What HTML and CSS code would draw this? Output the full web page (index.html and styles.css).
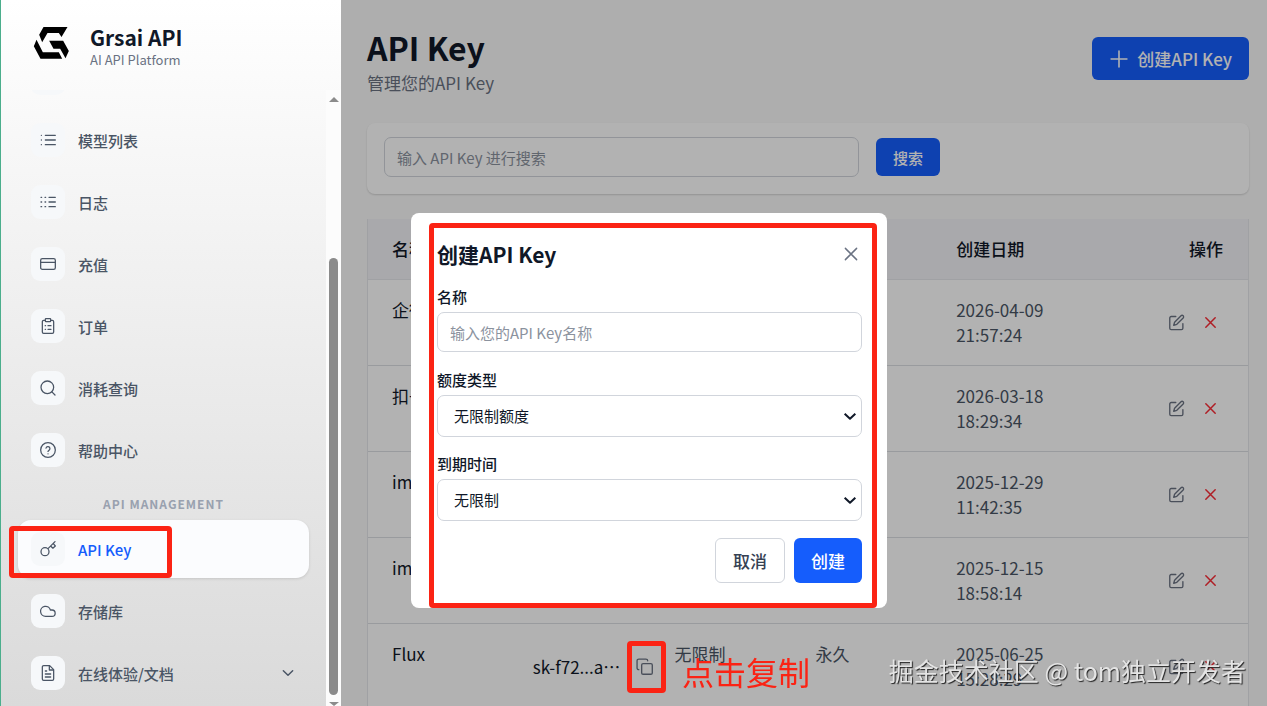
FILE: index.html
```html
<!DOCTYPE html>
<html lang="zh-CN">
<head>
  <meta charset="UTF-8">
  <meta name="viewport" content="width=device-width, initial-scale=1.0">
  <title>API Key - Grsai API</title>
  <link rel="stylesheet" href="styles.css">
</head>
<body>
  <!-- 图标 -->
  <svg class="sprite" aria-hidden="true">
    <symbol id="i-edit" viewBox="0 0 24 24"><path d="M11 3.500H4.500A2 2 0 0 0 2.500 5.500V20a2 2 0 0 0 2 2h14.500a2 2 0 0 0 2-2v-6.500"/><path d="M18.400 2.600a2.100 2.100 0 0 1 3 3L12.400 14.600 8 16l1.300-4.400z"/></symbol>
    <symbol id="i-x" viewBox="0 0 24 24"><path d="M4.500 4.500l15 15M19.500 4.500l-15 15"/></symbol>
    <symbol id="i-copy" viewBox="0 0 24 24"><rect x="8" y="8" width="15" height="15" rx="2"/><path d="M4 16.500a2.500 2.500 0 0 1-2.500-2.500V4A2.500 2.500 0 0 1 4 1.500h10A2.500 2.500 0 0 1 16.500 4"/></symbol>
    <symbol id="i-down" viewBox="0 0 24 24"><path d="M4 8.500l8 7.500 8-7.500"/></symbol>
  </svg>

  <div class="layout">
    <aside class="sidebar">
      <div class="brand">
        <svg class="brand-logo" viewBox="100 78 110 102" aria-hidden="true">
          <path d="M131 81H203L185 111L177 99H143L127 127L118 104Z"/>
          <path d="M110 119L129 157H177L187 176H122L102 139Z"/>
          <path d="M148 122H190L207 153L197 175L181 146H161Z"/>
        </svg>
        <div class="brand-text">
          <strong class="brand-name">Grsai API</strong>
          <span class="brand-sub">AI API Platform</span>
        </div>
      </div>

      <div class="nav-wrap">
        <nav class="nav">
          <a class="nav-item scrolled" href="#"><span class="nav-icon"></span></a>
          <a class="nav-item" href="#"><span class="nav-icon"><svg viewBox="0 0 24 24"><path d="M8 5h15M8 12h15M8 19h15M2 5h.1M2 12h.1M2 19h.1"/></svg></span>模型列表</a>
          <a class="nav-item" href="#"><span class="nav-icon"><svg viewBox="0 0 24 24"><path d="M13.500 5H23M13.500 12H23M13.500 19H23M1.500 5h1M7.500 5h1M1.500 12h1M7.500 12h1M1.500 19h1M7.500 19h1"/></svg></span>日志</a>
          <a class="nav-item" href="#"><span class="nav-icon"><svg viewBox="0 0 24 24"><rect x="1" y="4" width="22" height="16" rx="2.500"/><path d="M1 9.500h22"/></svg></span>充值</a>
          <a class="nav-item" href="#"><span class="nav-icon"><svg viewBox="0 0 24 24"><rect x="8" y="1" width="8" height="4.500" rx="1"/><path d="M16 3.500h2.500a2 2 0 0 1 2 2V21a2 2 0 0 1-2 2h-13a2 2 0 0 1-2-2V5.500a2 2 0 0 1 2-2H8M12 11.500h4.500M12 17h4.500M7.800 11.500h.5M7.800 17h.5"/></svg></span>订单</a>
          <a class="nav-item" href="#"><span class="nav-icon"><svg viewBox="0 0 24 24"><circle cx="11" cy="11" r="9.500"/><path d="M22.500 22.500l-4.700-4.700"/></svg></span>消耗查询</a>
          <a class="nav-item" href="#"><span class="nav-icon"><svg viewBox="0 0 24 24"><circle cx="12" cy="12" r="11"/><path d="M9 9.300a3 3 0 0 1 5.900.9c0 2-2.900 2.600-2.900 4M12 17.800h.1"/></svg></span>帮助中心</a>
          <h2 class="nav-title">API MANAGEMENT</h2>
          <a class="nav-item active" href="#"><span class="nav-icon"><svg viewBox="0 0 24 24"><circle cx="7.500" cy="16" r="6"/><path d="M12 11.500L22.500 1M16 7.500l3.300 3.300L23 7.500 20 4"/></svg></span>API Key<i class="mark mark-nav"></i></a>
          <a class="nav-item" href="#"><span class="nav-icon"><svg viewBox="0 0 24 24"><path d="M18 20H8.500a7.500 7.500 0 1 1 7.100-9.500H18a4.700 4.700 0 1 1 0 9.500z"/></svg></span>存储库</a>
          <a class="nav-item" href="#"><span class="nav-icon"><svg viewBox="0 0 24 24"><path d="M14.500 1H5.500a2 2 0 0 0-2 2v18a2 2 0 0 0 2 2h13a2 2 0 0 0 2-2V7z"/><path d="M14 1.500v6h6M8 9h2M8 13.500h8M8 18h8"/></svg></span>在线体验/文档<svg class="nav-arrow" viewBox="0 0 24 24"><path d="M5 8.500l7 7 7-7"/></svg></a>
        </nav>
        <div class="scrollbar" aria-hidden="true">
          <i class="scroll-up"></i>
          <i class="scroll-thumb"></i>
          <i class="scroll-down"></i>
        </div>
      </div>
    </aside>

    <main class="main">
      <header class="page-head">
        <div>
          <h1>API Key</h1>
          <p>管理您的API Key</p>
        </div>
        <button class="btn btn-primary btn-lg" type="button"><svg viewBox="0 0 24 24"><path d="M12 2.500v19M2.500 12h19"/></svg>创建API Key</button>
      </header>

      <form class="search-card">
        <input class="field" type="text" placeholder="输入 API Key 进行搜索" aria-label="搜索 API Key">
        <button class="btn btn-primary" type="button">搜索</button>
      </form>

      <table class="key-table">
        <thead>
          <tr><th>名称</th><th>API Key</th><th>额度</th><th>到期时间</th><th>创建日期</th><th class="ops">操作</th></tr>
        </thead>
        <tbody>
          <tr>
            <td class="name">企微</td><td></td><td>无限制</td><td>永久</td><td>2026-04-09<br>21:57:24</td>
            <td><div class="row-ops"><button class="icon-btn" type="button" aria-label="编辑"><svg><use href="#i-edit"/></svg></button><button class="icon-btn del" type="button" aria-label="删除"><svg><use href="#i-x"/></svg></button></div></td>
          </tr>
          <tr>
            <td class="name">扣子</td><td></td><td>无限制</td><td>永久</td><td>2026-03-18<br>18:29:34</td>
            <td><div class="row-ops"><button class="icon-btn" type="button" aria-label="编辑"><svg><use href="#i-edit"/></svg></button><button class="icon-btn del" type="button" aria-label="删除"><svg><use href="#i-x"/></svg></button></div></td>
          </tr>
          <tr>
            <td class="name">image</td><td></td><td>无限制</td><td>永久</td><td>2025-12-29<br>11:42:35</td>
            <td><div class="row-ops"><button class="icon-btn" type="button" aria-label="编辑"><svg><use href="#i-edit"/></svg></button><button class="icon-btn del" type="button" aria-label="删除"><svg><use href="#i-x"/></svg></button></div></td>
          </tr>
          <tr>
            <td class="name">image</td><td></td><td>无限制</td><td>永久</td><td>2025-12-15<br>18:58:14</td>
            <td><div class="row-ops"><button class="icon-btn" type="button" aria-label="编辑"><svg><use href="#i-edit"/></svg></button><button class="icon-btn del" type="button" aria-label="删除"><svg><use href="#i-x"/></svg></button></div></td>
          </tr>
          <tr>
            <td class="name">Flux</td>
            <td class="name"><div class="key-cell"><span>sk-f72...a…</span><button class="icon-btn" type="button" aria-label="复制"><svg><use href="#i-copy"/></svg></button></div></td>
            <td>无限制</td><td>永久</td><td>2025-06-25<br>15:28:29</td>
            <td><div class="row-ops"><button class="icon-btn" type="button" aria-label="编辑"><svg><use href="#i-edit"/></svg></button><button class="icon-btn del" type="button" aria-label="删除"><svg><use href="#i-x"/></svg></button></div></td>
          </tr>
        </tbody>
      </table>
    </main>
  </div>

  <div class="backdrop"></div>

  <!-- 创建弹窗 -->
  <div class="modal-wrap">
    <form class="modal" role="dialog" aria-labelledby="modal-title">
      <div class="modal-head">
        <h2 id="modal-title">创建API Key</h2>
        <button class="icon-btn close" type="button" aria-label="关闭"><svg><use href="#i-x"/></svg></button>
      </div>
      <div class="form-row">
        <label for="key-name">名称</label>
        <input class="field" id="key-name" type="text" placeholder="输入您的API Key名称">
      </div>
      <div class="form-row">
        <label for="key-quota">额度类型</label>
        <div class="select">
          <select class="field" id="key-quota"><option>无限制额度</option></select>
          <svg><use href="#i-down"/></svg>
        </div>
      </div>
      <div class="form-row">
        <label for="key-expire">到期时间</label>
        <div class="select">
          <select class="field" id="key-expire"><option>无限制</option></select>
          <svg><use href="#i-down"/></svg>
        </div>
      </div>
      <div class="modal-foot">
        <button class="btn btn-plain" type="button">取消</button>
        <button class="btn btn-primary" type="button">创建</button>
      </div>
      <i class="mark mark-modal"></i>
    </form>
  </div>

  <!-- 标注 -->
  <i class="mark mark-copy"></i>
  <span class="tip">点击复制</span>
  <span class="watermark">掘金技术社区 @ tom独立开发者</span>
</body>
</html>
```
FILE: styles.css
```css
* {
  box-sizing: border-box;
}
body {
  margin: 0;
  height: 100vh;
  overflow: hidden;
  position: relative;
  font-family: "Noto Sans CJK SC", sans-serif;
  font-size: 17px;
  line-height: 25px;
  color: #101828;
  background: #fafafa;
}
h1, h2, p {
  margin: 0;
}
button, input, select {
  font-family: inherit;
}
svg {
  fill: none;
  stroke: currentColor;
  stroke-width: 1.9;
  stroke-linecap: round;
  stroke-linejoin: round;
}
.sprite {
  position: absolute;
  width: 0;
  height: 0;
}
.layout {
  display: flex;
  height: 100vh;
}

/* 侧边栏 */
.sidebar {
  position: relative;
  z-index: 2;
  flex: 0 0 341px;
  display: flex;
  flex-direction: column;
  border-left: 1px solid #4bae8c;
  background: linear-gradient(#fff, #f2f2f2 35%, #dadada);
}
.brand {
  display: flex;
  align-items: center;
  gap: 20px;
  height: 90px;
  padding: 0 32px 4px;
  flex-shrink: 0;
}
.brand-logo {
  width: 37px;
  height: 34px;
  fill: #000;
  stroke: none;
}
.brand-text {
  display: flex;
  flex-direction: column;
  padding-top: 7px;
}
.brand-name {
  font-size: 21px;
  line-height: 26px;
  font-weight: 600;
}
.brand-sub {
  font-size: 13px;
  line-height: 20px;
  color: #6a7282;
}
.nav-wrap {
  display: flex;
  flex: 1;
  min-height: 0;
}
.nav {
  flex: 1;
  padding: 0 17px;
  display: flex;
  flex-direction: column;
  gap: 4px;
  overflow: hidden;
}
.nav-item {
  position: relative;
  display: flex;
  align-items: center;
  gap: 13px;
  flex: 0 0 58px;
  padding: 0 13px;
  border-radius: 13px;
  color: #4a5565;
  font-size: 15px;
  font-weight: 500;
  text-decoration: none;
}
/* 已滚出顶部的一项 */
.nav-item.scrolled {
  margin-top: -41px;
}
.nav-item.active {
  color: #155dfc;
  background: #fbfcfe;
  box-shadow: 0 1px 3px rgba(0, 0, 0, .12);
}
.nav-icon {
  display: flex;
  align-items: center;
  justify-content: center;
  width: 34px;
  height: 34px;
  border-radius: 9px;
  color: #4a5565;
  background: #f6f8fa;
}
.nav-icon svg {
  width: 16px;
  height: 16px;
}
.nav-arrow {
  width: 16px;
  height: 16px;
  margin-left: auto;
  stroke-width: 2.2;
}
.nav-title {
  padding: 8px 0 0;
  font-size: 12px;
  line-height: 25px;
  font-weight: 700;
  letter-spacing: 1px;
  text-align: center;
  color: #99a1af;
}
.scrollbar {
  display: flex;
  flex-direction: column;
  align-items: center;
  width: 15px;
  padding-top: 7px;
  background: #fcfcfc;
}
.scroll-up,
.scroll-down {
  border: 5px solid transparent;
  border-top: 0;
  border-bottom: 5px solid #8b8b8b;
}
.scroll-thumb {
  width: 9px;
  flex: 1;
  margin: 156px 0 7px;
  border-radius: 5px;
  background: #8b8b8b;
}
.scroll-down {
  border-bottom: 0;
  border-top: 4px solid #8b8b8b;
}

/* 主区域 */
.main {
  flex: 1;
  min-width: 0;
  padding: 28px 18px 0 26px;
}
.page-head {
  display: flex;
  justify-content: space-between;
  align-items: flex-start;
}
.page-head h1 {
  font-size: 32px;
  line-height: 38px;
  font-weight: 700;
}
.page-head p {
  margin-top: 4px;
  color: #6a7282;
}
.btn {
  border: 0;
  border-radius: 6px;
  padding: 0 17px;
  height: 38px;
  font-size: 15px;
  font-weight: 500;
  cursor: pointer;
}
.btn-primary {
  color: #fff;
  background: #155dfc;
}
.btn-plain {
  color: #364153;
  background: #fff;
  border: 1px solid #d1d5dc;
}
.btn-lg {
  display: flex;
  align-items: center;
  gap: 8px;
  height: 43px;
  margin-top: 9px;
  font-size: 17px;
}
.btn-lg svg {
  width: 20px;
  height: 20px;
}
.field {
  width: 100%;
  height: 40px;
  padding: 0 12px;
  border: 1px solid #d1d5dc;
  border-radius: 7px;
  font-size: 15px;
  color: #101828;
  background: #fff;
}
.field::placeholder {
  color: #8b929e;
}
.search-card {
  display: flex;
  align-items: center;
  gap: 17px;
  margin-top: 28px;
  padding: 14px 17px 17px;
  border-radius: 8px;
  background: #fff;
  box-shadow: 0 1px 2px rgba(0, 0, 0, .16);
}
.search-card .field {
  width: 56%;
}
.key-table {
  width: 100%;
  margin-top: 25px;
  table-layout: fixed;
  border-spacing: 0;
  background: #fff;
  border: 1px solid #e5e7eb;
  border-top: 0;
}
.key-table th {
  width: 16%;
  height: 61px;
  padding: 0 25px 1px;
  text-align: left;
  font-weight: 500;
  white-space: nowrap;
  background: #f3f3f6;
  border-bottom: 1px solid #e5e7eb;
}
.key-table th.ops {
  width: 20%;
  text-align: right;
}
.key-table td {
  height: 86px;
  padding: 17px 19px 17px 25px;
  vertical-align: top;
  color: #4a5565;
  border-bottom: 1px solid #dcdee2;
}
.key-table td.name {
  color: #101828;
  padding-right: 0;
}
.key-table th:first-child,
.key-table td.name {
  padding-left: 24px;
}
.row-ops {
  display: flex;
  align-items: center;
  justify-content: flex-end;
  gap: 17px;
  height: 50px;
  padding-right: 10px;
}
.key-cell {
  display: flex;
  align-items: center;
  justify-content: space-between;
  height: 50px;
  width: 120px;
}
.icon-btn {
  display: flex;
  padding: 0;
  border: 0;
  color: #6a7282;
  background: none;
  cursor: pointer;
}
.icon-btn svg {
  width: 17px;
  height: 17px;
}
.icon-btn.del {
  color: #fb2c36;
}
.icon-btn.del svg {
  padding: 1px;
  stroke-width: 2.4;
}

/* 弹窗 */
.backdrop {
  position: fixed;
  inset: 0;
  z-index: 1;
  background: rgba(0, 0, 0, .3);
}
.modal-wrap {
  position: fixed;
  inset: 0;
  z-index: 3;
  display: flex;
  align-items: flex-start;
  justify-content: center;
  padding: 213px 0 0 31px;
}
.modal {
  position: relative;
  width: 476px;
  padding: 26px 25px 25px 26px;
  border-radius: 8px;
  background: #fff;
}
.modal-head {
  display: flex;
  align-items: center;
  justify-content: space-between;
  margin-bottom: 17px;
}
.modal-head h2 {
  font-size: 21px;
  line-height: 30px;
  font-weight: 600;
}
.icon-btn.close {
  padding-right: 2px;
}
.icon-btn.close svg {
  width: 18px;
  height: 18px;
}
.form-row {
  margin-bottom: 17px;
}
.form-row:nth-of-type(3) {
  margin-bottom: 16px;
}
.form-row label {
  display: block;
  font-size: 15px;
  line-height: 22px;
  font-weight: 500;
  margin-bottom: 4px;
}
.select {
  position: relative;
}
.select .field {
  display: block;
  height: 42px;
  padding: 0 16px 1px;
  appearance: none;
}
.select svg {
  position: absolute;
  right: 4px;
  top: 13px;
  width: 16px;
  height: 16px;
  stroke-width: 3;
  stroke-linecap: butt;
  pointer-events: none;
}
.modal-foot {
  display: flex;
  justify-content: flex-end;
  gap: 9px;
}
.modal-foot .btn {
  height: 45px;
  font-size: 17px;
}

/* 标注 */
.mark {
  position: absolute;
  border: 5px solid #fb2314;
  border-radius: 4px;
  pointer-events: none;
}
.mark-nav {
  left: -9px;
  top: 6px;
  width: 163px;
  height: 52px;
}
.mark-modal {
  inset: 10px 10px 0 18px;
}
.mark-copy {
  z-index: 4;
  left: 627px;
  top: 641px;
  width: 39px;
  height: 52px;
}
.tip {
  position: absolute;
  z-index: 4;
  left: 682px;
  top: 651px;
  font-size: 32px;
  line-height: 40px;
  color: #fb2314;
}
.watermark {
  position: absolute;
  z-index: 4;
  right: 21px;
  bottom: 18px;
  font-size: 25px;
  line-height: 36px;
  white-space: nowrap;
  color: #e4e4e4;
  text-shadow: 1px 1px 1px #222;
}
```
